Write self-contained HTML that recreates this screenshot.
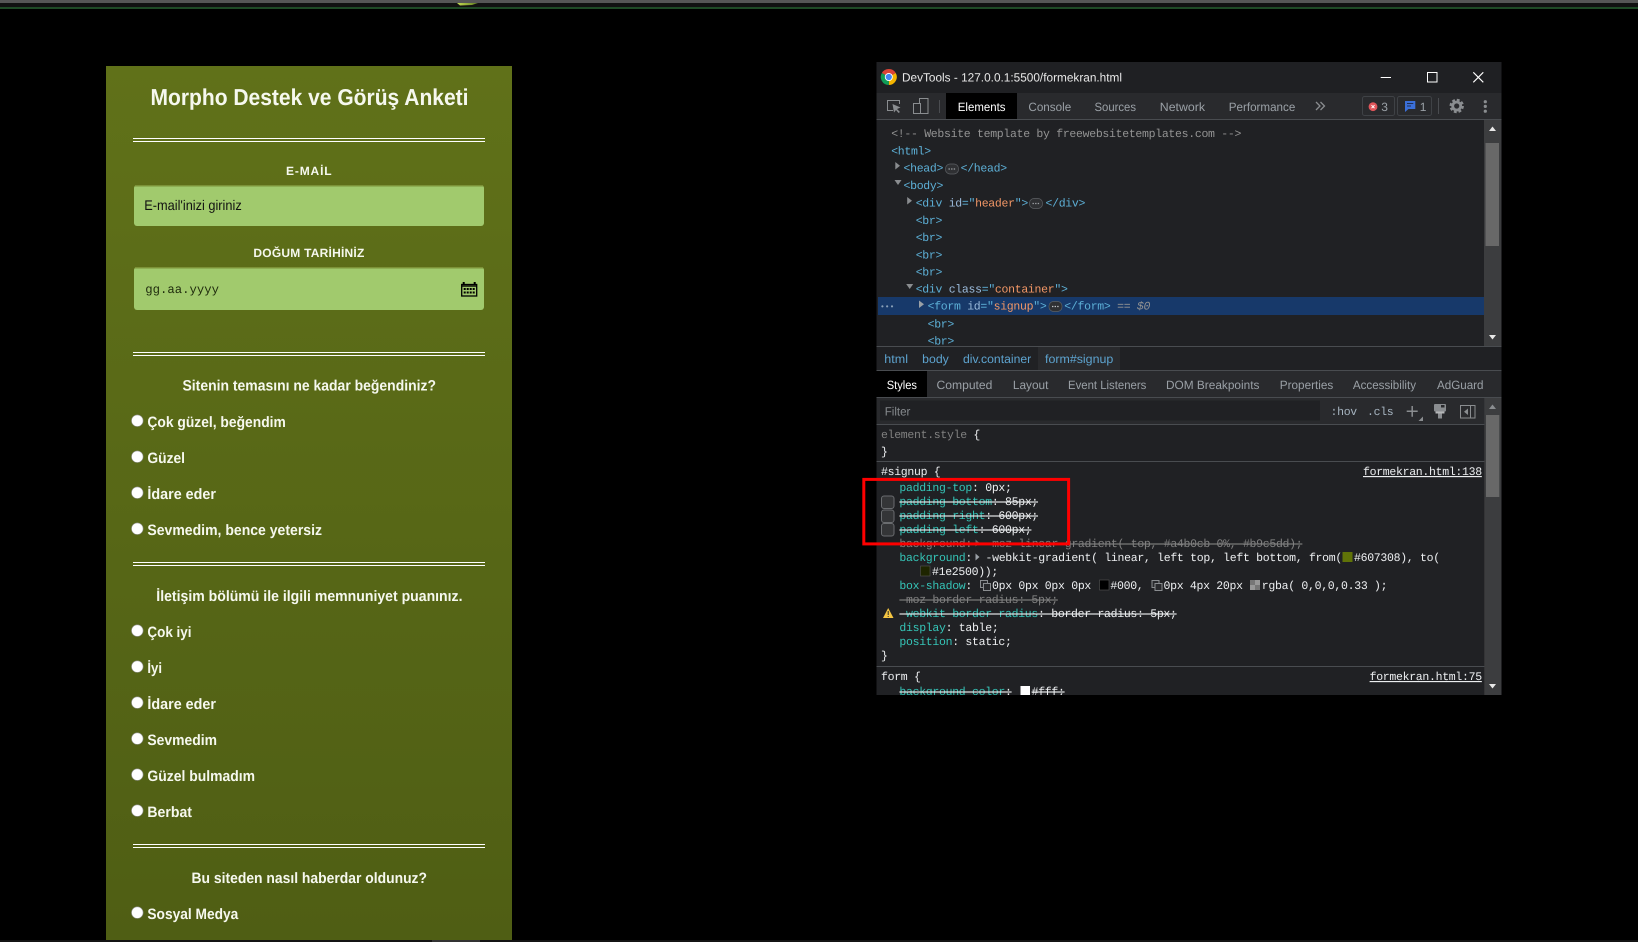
<!DOCTYPE html>
<html lang="tr">
<head>
<meta charset="utf-8">
<title>Morpho Destek ve Görüş Anketi</title>
<style>
html,body{margin:0;padding:0;background:#000;width:1638px;height:942px;overflow:hidden}
svg{display:block}
text{text-rendering:geometricPrecision;white-space:pre}
.f{font-family:"Liberation Sans",sans-serif;font-weight:700;fill:#f6f8ee}
.u{font-family:"Liberation Sans",sans-serif;font-size:12px;fill:#9aa0a6}
.m{font-family:"Liberation Mono",monospace;font-size:11.5px;letter-spacing:-.3px;fill:#eceef0}
.t{fill:#5db0d7}.a{fill:#9bbbdc}.v{fill:#f29766}.c{fill:#939393}
.p{fill:#35c4b7}.g{fill:#808080}
.s{text-decoration:line-through}
.l{text-decoration:underline}
</style>
</head>
<body>
<svg xmlns="http://www.w3.org/2000/svg" width="1638" height="942" viewBox="0 0 1638 942">
<defs>
<linearGradient id="pg" gradientUnits="userSpaceOnUse" x1="0" y1="66" x2="0" y2="940"><stop offset="0" stop-color="#607119"/><stop offset="1" stop-color="#4f5e14"/></linearGradient>
<linearGradient id="lm" x1="0" y1="0" x2="1" y2="0"><stop offset="0" stop-color="#c6dc52"/><stop offset="1" stop-color="#5d7a20"/></linearGradient>
<clipPath id="dt"><rect x="876.5" y="62" width="625" height="633"/></clipPath>
<clipPath id="el"><rect x="876.5" y="120" width="625" height="226"/></clipPath>
</defs>
<rect width="1638" height="942" fill="#000"/>
<!-- top strip -->
<rect x="0" y="0" width="1638" height="3" fill="#565656"/>
<rect x="0" y="3" width="1638" height="4" fill="#111"/>
<rect x="0" y="7" width="1638" height="2" fill="#1f4a26"/>
<path d="M457 3H478L472 5L460 5.5Z" fill="url(#lm)"/>
<!-- bottom strip -->
<rect x="0" y="940" width="1638" height="2" fill="#141414"/>
<rect x="432" y="940" width="48" height="2" fill="#333"/>
<!-- form panel -->
<rect x="106" y="66" width="406" height="874" fill="url(#pg)"/>
<text class="f" x="150.5" y="105" font-size="23" textLength="318" lengthAdjust="spacingAndGlyphs">Morpho Destek ve Görüş Anketi</text>
<g fill="#fff">
<rect x="133" y="138" width="352" height="1"/><rect x="133" y="141" width="352" height="1"/>
<rect x="133" y="352" width="352" height="1"/><rect x="133" y="355" width="352" height="1"/>
<rect x="133" y="562" width="352" height="1"/><rect x="133" y="565" width="352" height="1"/>
<rect x="133" y="844" width="352" height="1"/><rect x="133" y="847" width="352" height="1"/>
</g>
<text class="f" x="286" y="175" font-size="12" textLength="45.6" lengthAdjust="spacing">E-MAİL</text>
<rect x="134" y="185" width="350" height="41" rx="3" fill="#a1ca6d"/>
<rect x="135" y="185" width="348" height="1" fill="#7c9237"/><rect x="134.5" y="186" width="349" height="1" fill="#8eaf53"/>
<text x="144.3" y="210" font-family="Liberation Sans,sans-serif" font-size="14" fill="#111" textLength="97.4" lengthAdjust="spacingAndGlyphs">E-mail'inizi giriniz</text>
<text class="f" x="253.4" y="257" font-size="12" textLength="110.9" lengthAdjust="spacing">DOĞUM TARİHİNİZ</text>
<rect x="134" y="267" width="350" height="43" rx="3" fill="#a1ca6d"/>
<rect x="135" y="267" width="348" height="1" fill="#7c9237"/><rect x="134.5" y="268" width="349" height="1" fill="#8eaf53"/>
<text x="145.3" y="293" font-family="Liberation Mono,monospace" font-size="12.3" fill="#1e2a0c" textLength="73.7" lengthAdjust="spacingAndGlyphs">gg.aa.yyyy</text>
<!-- calendar -->
<g fill="none" stroke="#000">
<rect x="461.7" y="284.5" width="15" height="11.5" stroke-width="1.3"/>
<path d="M463.7 284.5V282M474.7 284.5V282" stroke-width="2"/>
<path d="M461.7 286H476.7" stroke-width="1.4"/>
</g>
<g fill="#000">
<rect x="463.7" y="288" width="2" height="2"/><rect x="466.7" y="288" width="2" height="2"/><rect x="469.7" y="288" width="2" height="2"/><rect x="472.7" y="288" width="2" height="2"/>
<rect x="463.7" y="291.5" width="2" height="2"/><rect x="466.7" y="291.5" width="2" height="2"/><rect x="469.7" y="291.5" width="2" height="2"/><rect x="472.7" y="291.5" width="2" height="2"/>
</g>
<!-- Q1 -->
<text class="f" x="182.5" y="390.5" font-size="15" textLength="253.5" lengthAdjust="spacingAndGlyphs">Sitenin temasını ne kadar beğendiniz?</text>
<g fill="#fff" stroke="#8d8f8a" stroke-width=".6">
<circle cx="137.3" cy="420.7" r="5.8"/><circle cx="137.3" cy="456.7" r="5.8"/><circle cx="137.3" cy="492.7" r="5.8"/><circle cx="137.3" cy="528.7" r="5.8"/>
<circle cx="137.3" cy="630.6" r="5.8"/><circle cx="137.3" cy="666.6" r="5.8"/><circle cx="137.3" cy="702.6" r="5.8"/><circle cx="137.3" cy="738.6" r="5.8"/><circle cx="137.3" cy="774.6" r="5.8"/><circle cx="137.3" cy="810.6" r="5.8"/>
<circle cx="137.3" cy="912.6" r="5.8"/>
</g>
<text class="f" x="147.4" y="427" font-size="15" textLength="138.4" lengthAdjust="spacingAndGlyphs">Çok güzel, beğendim</text>
<text class="f" x="147.4" y="463" font-size="15" textLength="37.6" lengthAdjust="spacingAndGlyphs">Güzel</text>
<text class="f" x="147.4" y="499" font-size="15" textLength="68.6" lengthAdjust="spacingAndGlyphs">İdare eder</text>
<text class="f" x="147.4" y="535" font-size="15" textLength="174.6" lengthAdjust="spacingAndGlyphs">Sevmedim, bence yetersiz</text>
<!-- Q2 -->
<text class="f" x="156.3" y="601" font-size="15" textLength="306.2" lengthAdjust="spacingAndGlyphs">İletişim bölümü ile ilgili memnuniyet puanınız.</text>
<text class="f" x="147.4" y="637" font-size="15" textLength="44.1" lengthAdjust="spacingAndGlyphs">Çok iyi</text>
<text class="f" x="147.4" y="673" font-size="15" textLength="14.6" lengthAdjust="spacingAndGlyphs">İyi</text>
<text class="f" x="147.4" y="709" font-size="15" textLength="68.6" lengthAdjust="spacingAndGlyphs">İdare eder</text>
<text class="f" x="147.4" y="745" font-size="15" textLength="69.6" lengthAdjust="spacingAndGlyphs">Sevmedim</text>
<text class="f" x="147.4" y="781" font-size="15" textLength="107.6" lengthAdjust="spacingAndGlyphs">Güzel bulmadım</text>
<text class="f" x="147.4" y="817" font-size="15" textLength="44.6" lengthAdjust="spacingAndGlyphs">Berbat</text>
<!-- Q3 -->
<text class="f" x="191.5" y="883" font-size="15" textLength="235.5" lengthAdjust="spacingAndGlyphs">Bu siteden nasıl haberdar oldunuz?</text>
<text class="f" x="147.4" y="919" font-size="15" textLength="90.9" lengthAdjust="spacingAndGlyphs">Sosyal Medya</text>

<!-- DevTools window -->
<g clip-path="url(#dt)">
<rect x="876.5" y="62" width="625" height="633" fill="#202124"/>
<!-- title bar -->
<rect x="876.5" y="62" width="625" height="31" fill="#1f2023"/>
<path d="M888.8 77L881.87 73A8 8 0 0 1 895.73 73Z" fill="#db4437"/>
<path d="M888.8 77L895.73 73A8 8 0 0 1 888.8 85Z" fill="#f4b400"/>
<path d="M888.8 77L888.8 85A8 8 0 0 1 881.87 73Z" fill="#0f9d58"/>
<circle cx="888.8" cy="77" r="4" fill="#fff"/><circle cx="888.8" cy="77" r="3.1" fill="#4285f4"/>
<text class="u" x="902" y="81.5" style="fill:#e8e8e8" textLength="220" lengthAdjust="spacingAndGlyphs">DevTools - 127.0.0.1:5500/formekran.html</text>
<rect x="1380.7" y="77" width="10.3" height="1" fill="#fff"/>
<rect x="1427.5" y="72.5" width="9.5" height="9.5" fill="none" stroke="#fff"/>
<path d="M1473.3 72.3L1483.3 82.3M1483.3 72.3L1473.3 82.3" stroke="#fff" stroke-width="1.1"/>
<!-- toolbar -->
<rect x="876.5" y="93" width="625" height="26" fill="#292a2d"/>
<rect x="876.5" y="119" width="625" height="1" fill="#494c50"/>
<path d="M893 110.5H887.5V100.5H899.5V104" fill="none" stroke="#8a8d90"/>
<path d="M892.5 104L900.5 107.5L897 109L900 112L898.5 113L896 110L894 112.5Z" fill="#8a8d90"/>
<rect x="919.5" y="98.5" width="8.5" height="15" fill="none" stroke="#8a8d90"/>
<rect x="913.5" y="103.5" width="7" height="10" fill="#292a2d" stroke="#8a8d90"/>
<rect x="939" y="100" width="1" height="13" fill="#4a4c50"/>
<rect x="946" y="93" width="71" height="26" fill="#000"/>
<text class="u" x="957.8" y="111" style="fill:#fff" textLength="47.7" lengthAdjust="spacingAndGlyphs">Elements</text>
<text class="u" x="1028.4" y="111" textLength="42.8" lengthAdjust="spacingAndGlyphs">Console</text>
<text class="u" x="1094.5" y="111" textLength="41.5" lengthAdjust="spacingAndGlyphs">Sources</text>
<text class="u" x="1159.8" y="111" textLength="45.2" lengthAdjust="spacingAndGlyphs">Network</text>
<text class="u" x="1228.8" y="111" textLength="66.5" lengthAdjust="spacingAndGlyphs">Performance</text>
<path d="M1316 102L1320 106L1316 110M1320.5 102L1324.5 106L1320.5 110" fill="none" stroke="#8a8d90" stroke-width="1.3"/>
<rect x="1362.5" y="96.5" width="32" height="19" rx="2" fill="none" stroke="#3f4246"/>
<circle cx="1373" cy="106.7" r="4.4" fill="#e0555a"/>
<path d="M1371.5 105.2L1374.5 108.2M1374.5 105.2L1371.5 108.2" stroke="#fff" stroke-width="1"/>
<text class="u" x="1381.3" y="111">3</text>
<rect x="1397.5" y="96.5" width="34" height="19" rx="2" fill="none" stroke="#3f4246"/>
<path d="M1405 101H1415.3V109H1408.5L1405 112Z" fill="#3b6fd8"/>
<path d="M1407 103.5H1413.3M1407 106H1411" stroke="#1f2f55" stroke-width="1"/>
<text class="u" x="1419.7" y="111">1</text>
<rect x="1438" y="98" width="1" height="16" fill="#4a4c50"/>
<circle cx="1456.7" cy="106" r="6" fill="none" stroke="#8a8d90" stroke-width="2.4" stroke-dasharray="2.8 1.9"/>
<circle cx="1456.7" cy="106" r="4" fill="none" stroke="#8a8d90" stroke-width="2.8"/>
<g fill="#8a8d90"><circle cx="1485.3" cy="101.7" r="1.6"/><circle cx="1485.3" cy="106.4" r="1.6"/><circle cx="1485.3" cy="111.2" r="1.6"/></g>
<!-- elements panel -->
<rect x="878" y="297" width="606" height="18" fill="#17396a"/>
<g clip-path="url(#el)">
<text class="m c" x="891.2" y="137">&lt;!-- Website template by freewebsitetemplates.com --&gt;</text>
<text class="m t" x="891.2" y="154.25">&lt;html&gt;</text>
<path d="M895.3 162V169.5L900 165.7Z" fill="#8a8d90"/>
<text class="m t" x="903.5" y="171.5">&lt;head&gt;</text>
<rect x="945.5" y="164" width="13" height="10" rx="4.5" fill="#2f3033" stroke="#5d6064" stroke-width=".7"/>
<path d="M948.5 169H955.5" stroke="#9da0a4" stroke-width="1.3" stroke-dasharray="1.4 1.2"/>
<text class="m t" x="960.6" y="171.5">&lt;/head&gt;</text>
<path d="M894.5 180H901.5L898 185Z" fill="#8a8d90"/>
<text class="m t" x="903.5" y="188.75">&lt;body&gt;</text>
<path d="M907.2 197V204.5L912 200.7Z" fill="#8a8d90"/>
<text class="m" x="915.7" y="206.5"><tspan class="t">&lt;div </tspan><tspan class="a">id</tspan><tspan class="t">="</tspan><tspan class="v">header</tspan><tspan class="t">"&gt;</tspan></text>
<rect x="1029.5" y="198.5" width="13" height="10" rx="4.5" fill="#2f3033" stroke="#5d6064" stroke-width=".7"/>
<path d="M1032.5 203.5H1039.5" stroke="#9da0a4" stroke-width="1.3" stroke-dasharray="1.4 1.2"/>
<text class="m t" x="1045.5" y="206.5">&lt;/div&gt;</text>
<text class="m t" x="915.7" y="223.75">&lt;br&gt;</text>
<text class="m t" x="915.7" y="241">&lt;br&gt;</text>
<text class="m t" x="915.7" y="258.25">&lt;br&gt;</text>
<text class="m t" x="915.7" y="275.5">&lt;br&gt;</text>
<path d="M906.2 284H913.2L909.7 289Z" fill="#8a8d90"/>
<text class="m" x="915.7" y="292.25"><tspan class="t">&lt;div </tspan><tspan class="a">class</tspan><tspan class="t">="</tspan><tspan class="v">container</tspan><tspan class="t">"&gt;</tspan></text>
<path d="M919 300.5V308L924 304.2Z" fill="#9aa0a6"/>
<text x="880" y="309" font-family="Liberation Mono,monospace" font-size="8" fill="#8aa0b8">•••</text>
<text class="m" x="927.6" y="309.5"><tspan class="t">&lt;form </tspan><tspan class="a">id</tspan><tspan class="t">="</tspan><tspan class="v">signup</tspan><tspan class="t">"&gt;</tspan></text>
<rect x="1049" y="301.5" width="13" height="10" rx="4.5" fill="#2f3033" stroke="#5d6064" stroke-width=".7"/>
<path d="M1052 306.5H1059" stroke="#c0c3c6" stroke-width="1.3" stroke-dasharray="1.4 1.2"/>
<text class="m t" x="1064.3" y="309.5">&lt;/form&gt;</text>
<text class="m c" x="1117.1" y="309.5">==</text>
<text class="m c" x="1136.9" y="309.5" font-style="italic">$0</text>
<text class="m t" x="927.6" y="327.5">&lt;br&gt;</text>
<text class="m t" x="927.6" y="344.5">&lt;br&gt;</text>
</g>
<!-- upper scrollbar -->
<rect x="1484" y="120" width="17.5" height="226" fill="#3c3d3f"/>
<rect x="1485.5" y="143" width="13.5" height="103" fill="#686868"/>
<path d="M1492.5 126.5L1496 131H1489Z" fill="#e8e8e8"/>
<path d="M1492.5 339.5L1496 335H1489Z" fill="#e8e8e8"/>
<!-- breadcrumbs -->
<rect x="876.5" y="346" width="625" height="1" fill="#494c50"/>
<rect x="876.5" y="347" width="625" height="23" fill="#202124"/>
<rect x="1038" y="347" width="82" height="23" fill="#292a2d"/>
<text class="u" x="884.3" y="363" style="fill:#5da3cf" textLength="23.7" lengthAdjust="spacingAndGlyphs">html</text>
<text class="u" x="922.2" y="363" style="fill:#5da3cf" textLength="26.6" lengthAdjust="spacingAndGlyphs">body</text>
<text class="u" x="963" y="363" style="fill:#5da3cf" textLength="68.2" lengthAdjust="spacingAndGlyphs">div.container</text>
<text class="u" x="1045" y="363" style="fill:#5da3cf" textLength="68.3" lengthAdjust="spacingAndGlyphs">form#signup</text>
<rect x="876.5" y="370" width="625" height="1" fill="#494c50"/>
<!-- sub tabs -->
<rect x="876.5" y="371" width="625" height="26" fill="#292a2d"/>
<rect x="876.5" y="371" width="50.5" height="26" fill="#000"/>
<text class="u" x="886.7" y="389" style="fill:#fff" textLength="30.3" lengthAdjust="spacingAndGlyphs">Styles</text>
<text class="u" x="936.5" y="389" textLength="55.9" lengthAdjust="spacingAndGlyphs">Computed</text>
<text class="u" x="1012.9" y="389" textLength="35.5" lengthAdjust="spacingAndGlyphs">Layout</text>
<text class="u" x="1068" y="389" textLength="78.3" lengthAdjust="spacingAndGlyphs">Event Listeners</text>
<text class="u" x="1166" y="389" textLength="93.4" lengthAdjust="spacingAndGlyphs">DOM Breakpoints</text>
<text class="u" x="1279.8" y="389" textLength="53.5" lengthAdjust="spacingAndGlyphs">Properties</text>
<text class="u" x="1352.9" y="389" textLength="63.1" lengthAdjust="spacingAndGlyphs">Accessibility</text>
<text class="u" x="1437" y="389" textLength="46.5" lengthAdjust="spacingAndGlyphs">AdGuard</text>
<rect x="876.5" y="397" width="625" height="1" fill="#494c50"/>
<!-- filter bar -->
<rect x="876.5" y="398" width="608" height="26" fill="#292a2d"/>
<rect x="880" y="400.5" width="440" height="20" fill="#202124"/>
<text class="u" x="884.7" y="415.5" style="fill:#868a8e" textLength="25.7" lengthAdjust="spacingAndGlyphs">Filter</text>
<text class="m" x="1330.5" y="415" style="fill:#a6b4c0">:hov</text>
<text class="m" x="1367" y="415" style="fill:#a6b4c0">.cls</text>
<path d="M1412.2 406V416.7M1406.7 411.3H1417.7" stroke="#8a8d90" stroke-width="1.5"/>
<path d="M1423 416.5V421H1418.5Z" fill="#8a8d90"/>
<rect x="1434" y="404" width="12" height="7.5" rx="1" fill="#8a8d90"/>
<rect x="1441" y="405" width="3.5" height="2.5" fill="#292a2d"/>
<rect x="1435.5" y="411.5" width="9" height="2" fill="#b5b7b9"/>
<rect x="1438" y="413.5" width="4" height="5" fill="#8a8d90"/>
<rect x="1460.5" y="405.5" width="14.5" height="12.5" fill="none" stroke="#8a8d90"/>
<rect x="1470" y="405.5" width="1" height="12.5" fill="#8a8d90"/>
<path d="M1468 408.5V415L1464 411.7Z" fill="#8a8d90"/>
<rect x="876.5" y="424" width="608" height="1" fill="#494c50"/>
<!-- styles -->
<text class="m" x="881" y="438"><tspan class="g">element.style </tspan>{</text>
<text class="m" x="881" y="455">}</text>
<rect x="876.5" y="461" width="608" height="1" fill="#494c50"/>
<text class="m" x="881" y="475">#signup {</text>
<text class="m l" x="1363" y="475">formekran.html:138</text>
<text class="m" x="899.4" y="491"><tspan class="p">padding-top</tspan>: 0px;</text>
<rect x="881.5" y="496" width="12.5" height="12.5" rx="2.5" fill="#343537" stroke="#6a6c6f"/>
<text class="m s" x="899.4" y="505"><tspan class="p">padding-bottom</tspan>: 85px;</text>
<rect x="881.5" y="510" width="12.5" height="12.5" rx="2.5" fill="#343537" stroke="#6a6c6f"/>
<text class="m s" x="899.4" y="519"><tspan class="p">padding-right</tspan>: 600px;</text>
<rect x="881.5" y="523.5" width="12.5" height="12.5" rx="2.5" fill="#343537" stroke="#6a6c6f"/>
<text class="m s" x="899.4" y="533"><tspan class="p">padding-left</tspan>: 600px;</text>
<text class="m g s" x="899.4" y="547">background:</text>
<path d="M975.5 539.5V546.5L979.5 543Z" fill="#6a6d70"/>
<text class="m g s" x="985.5" y="547">-moz-linear-gradient( top, #a4b0cb 0%, #b9c5dd);</text>
<text class="m" x="899.4" y="561"><tspan class="p">background</tspan>:</text>
<path d="M975.5 553.5V560.5L979.5 557Z" fill="#9aa0a6"/>
<text class="m" x="985.5" y="561">-webkit-gradient( linear, left top, left bottom, from(</text>
<rect x="1342.5" y="552" width="10" height="10" fill="#607308"/>
<text class="m" x="1354" y="561">#607308), to(</text>
<rect x="920.5" y="566" width="9.5" height="10" fill="#1e2500" stroke="#555" stroke-width=".6"/>
<text class="m" x="932" y="575">#1e2500));</text>
<text class="m" x="899.4" y="589"><tspan class="p">box-shadow</tspan>:</text>
<g fill="#292a2d" stroke="#8a8d90" stroke-width="1"><rect x="980.5" y="580.5" width="7" height="7"/><rect x="983.5" y="583.5" width="7" height="7"/></g>
<text class="m" x="992" y="589">0px 0px 0px 0px</text>
<rect x="1099.5" y="580" width="9.5" height="10" fill="#000" stroke="#555" stroke-width=".6"/>
<text class="m" x="1110.4" y="589">#000,</text>
<g fill="#292a2d" stroke="#8a8d90" stroke-width="1"><rect x="1152" y="580.5" width="7" height="7"/><rect x="1155" y="583.5" width="7" height="7"/></g>
<text class="m" x="1163.5" y="589">0px 4px 20px</text>
<rect x="1250" y="580" width="10" height="10" fill="#999"/>
<rect x="1250" y="580" width="5" height="5" fill="#777"/><rect x="1255" y="585" width="5" height="5" fill="#777"/>
<text class="m" x="1261.8" y="589">rgba( 0,0,0,0.33 );</text>
<text class="m g s" x="899.4" y="603">-moz-border-radius: 5px;</text>
<path d="M888.2 608L893.5 618H883Z" fill="#f4c542"/>
<rect x="887.7" y="611" width="1" height="4" fill="#2a2a2a"/><rect x="887.7" y="616" width="1" height="1" fill="#2a2a2a"/>
<text class="m s" x="899.4" y="617"><tspan class="p">-webkit-border-radius</tspan>: border-radius: 5px;</text>
<text class="m" x="899.4" y="631"><tspan class="p">display</tspan>: table;</text>
<text class="m" x="899.4" y="645"><tspan class="p">position</tspan>: static;</text>
<text class="m" x="881" y="659">}</text>
<rect x="876.5" y="666" width="608" height="1" fill="#494c50"/>
<text class="m" x="881" y="680">form {</text>
<text class="m l" x="1369.6" y="680">formekran.html:75</text>
<text class="m s" x="899.4" y="695"><tspan class="p">background-color</tspan>:</text>
<rect x="1020.5" y="686" width="9.5" height="10" fill="#fff"/>
<text class="m s" x="1031.6" y="695">#fff;</text>
<!-- lower scrollbar -->
<rect x="1484.3" y="398" width="17.2" height="297" fill="#3c3d3f"/>
<rect x="1486" y="415" width="13.3" height="82" fill="#686868"/>
<path d="M1492.5 404.5L1496 409H1489Z" fill="#8a8d90"/>
<path d="M1492.5 688.5L1496 684H1489Z" fill="#e8e8e8"/>
</g>
<!-- red annotation -->
<rect x="863.8" y="479.4" width="204.8" height="64.5" fill="none" stroke="#fe0000" stroke-width="3"/>
</svg>
</body>
</html>
